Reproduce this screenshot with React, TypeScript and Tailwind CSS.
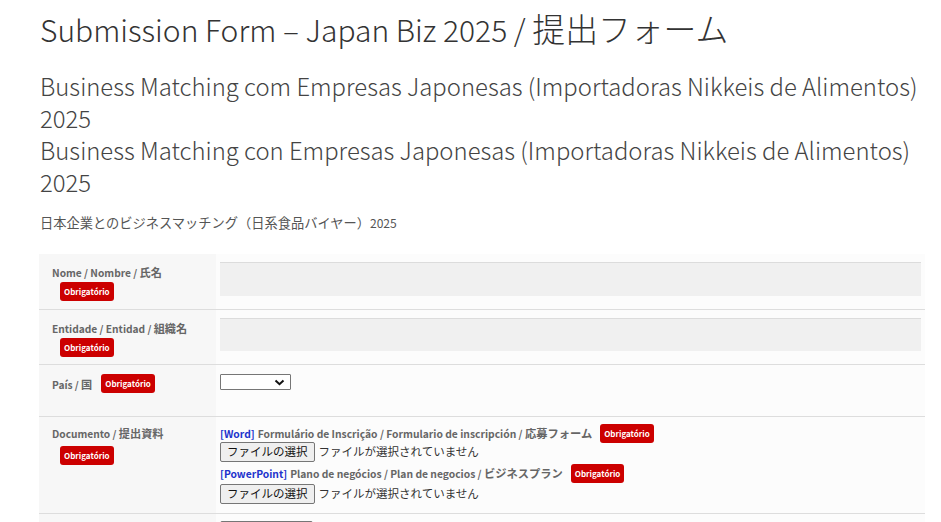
import React from "react";

const jp = "font-['Noto_Sans_CJK_JP','Noto_Sans_CJK_SC',sans-serif]";

const cjkRe = /([\u3000-\u30ff\u4e00-\u9fff\uff00-\uffef]+)/;

function T({ children }: { children: string }) {
  const parts = children.split(cjkRe);
  return (
    <>
      {parts.map((p, i) =>
        cjkRe.test(p) ? (
          <span key={i} className="text-[1.095em]">
            {p}
          </span>
        ) : (
          <React.Fragment key={i}>{p}</React.Fragment>
        )
      )}
    </>
  );
}

function Badge({ className = "" }: { className?: string }) {
  return (
    <span
      className={`inline-flex items-center h-[19px] bg-[#cc0000] text-white text-[8px] font-bold leading-none px-[4px] rounded-[3px] ${className}`}
    >
      Obrigatório
    </span>
  );
}

function FileField() {
  return (
    <div className="flex items-center text-[11.5px] leading-none text-[#333]">
      <span className="inline-flex items-center h-[20px] px-[6px] border border-[#767676] bg-[#efefef] text-[#111] rounded-[2px]">
        ファイルの選択
      </span>
      <span className="ml-[4px]">ファイルが選択されていません</span>
    </div>
  );
}

export default function App() {
  return (
    <div className={`min-h-screen bg-white text-[#333] ${jp}`}>
      <div className="pl-[40px] pr-[16px] pt-[8px]">
        <h1 className="text-[30px] font-light leading-[40px] text-[#333]">
          <T>Submission Form – Japan Biz 2025 / 提出フォーム</T>
        </h1>
        <h2 className="mt-[21px] text-[23.85px] font-light leading-[32px] text-[#444] w-[886px]">
          Business Matching com Empresas Japonesas (Importadoras Nikkeis de Alimentos) 2025
          <br />
          Business Matching con Empresas Japonesas (Importadoras Nikkeis de Alimentos) 2025
        </h2>
        <p className="mt-[16px] text-[12.1px] leading-[18px] text-[#555]">
          <T>日本企業とのビジネスマッチング（日系食品バイヤー）2025</T>
        </p>

        <div className="mt-[22px] w-[886px] ml-[-1px] text-[10.2px]">
          {/* Nome */}
          <div className="flex border-b border-[#dddddd]">
            <div className="w-[177px] bg-[#f7f7f7] px-[13px] pt-[11px] pb-[8px] shrink-0">
              <div className="font-bold text-[#666] leading-[14px]">
                <T>Nome / Nombre / 氏名</T>
              </div>
              <Badge className="ml-[8px] mt-[2px]" />
            </div>
            <div className="flex-1 bg-[#fcfcfc] px-[4px] pt-[8px] pb-[12px]">
              <div className="h-[34px] bg-[#f0f0f0] border-t border-[#dcdcdc]" />
            </div>
          </div>
          {/* Entidade */}
          <div className="flex border-b border-[#dddddd]">
            <div className="w-[177px] bg-[#f7f7f7] px-[13px] pt-[11px] pb-[7px] shrink-0">
              <div className="font-bold text-[#666] leading-[14px]">
                <T>Entidade / Entidad / 組織名</T>
              </div>
              <Badge className="ml-[8px] mt-[2px]" />
            </div>
            <div className="flex-1 bg-[#fcfcfc] px-[4px] pt-[8px] pb-[11px]">
              <div className="h-[33px] bg-[#f0f0f0] border-t border-[#dcdcdc]" />
            </div>
          </div>
          {/* Pais */}
          <div className="flex border-b border-[#dddddd] h-[52px]">
            <div className="w-[177px] bg-[#f7f7f7] px-[13px] pt-[9px] shrink-0 flex items-start">
              <span className="font-bold text-[#666] leading-[14px] mt-[3px]">
                <T>País / 国</T>
              </span>
              <Badge className="ml-[9px]" />
            </div>
            <div className="flex-1 bg-[#fcfcfc] px-[4px] pt-[9px]">
              <div className="w-[71px] h-[16px] border border-[#767676] bg-white flex items-center justify-end pr-[5px] rounded-[1px]">
                <svg width="11" height="7" viewBox="0 0 11 7">
                  <path d="M1.5 1.5 L5.5 5.2 L9.5 1.5" fill="none" stroke="#111" strokeWidth="2" />
                </svg>
              </div>
            </div>
          </div>
          {/* Documento */}
          <div className="flex border-b border-[#dddddd] h-[97px]">
            <div className="w-[177px] bg-[#f7f7f7] px-[13px] pt-[9px] shrink-0">
              <div className="font-bold text-[#666] leading-[14px]">
                <T>Documento / 提出資料</T>
              </div>
              <Badge className="ml-[8px] mt-[5px]" />
            </div>
            <div className="flex-1 bg-[#fcfcfc] px-[4px] pt-[8px]">
              <div className="flex items-center h-[17px] font-bold text-[#666] text-[10.3px]">
                <span className="text-[#2233cc]">[Word]</span>
                <span className="ml-[3px]">
                  <T>Formulário de Inscrição / Formulario de inscripción / 応募フォーム</T>
                </span>
                <Badge className="ml-[8px]" />
              </div>
              <FileField />
              <div className="flex items-center h-[17px] font-bold text-[#666] mt-[3px] text-[10.3px]">
                <span className="text-[#2233cc]">[PowerPoint]</span>
                <span className="ml-[3px]">
                  <T>Plano de negócios / Plan de negocios / ビジネスプラン</T>
                </span>
                <Badge className="ml-[8px]" />
              </div>
              <div className="mt-[2px]">
                <FileField />
              </div>
            </div>
          </div>
          {/* next row (cut off) */}
          <div className="flex h-[40px]">
            <div className="w-[177px] bg-[#f7f7f7] shrink-0" />
            <div className="flex-1 bg-[#fcfcfc] px-[4px] pt-[7px]">
              <div className="w-[93px] h-[21px] border border-[#767676] bg-[#efefef] rounded-[2px]" />
            </div>
          </div>
        </div>
      </div>
    </div>
  );
}
